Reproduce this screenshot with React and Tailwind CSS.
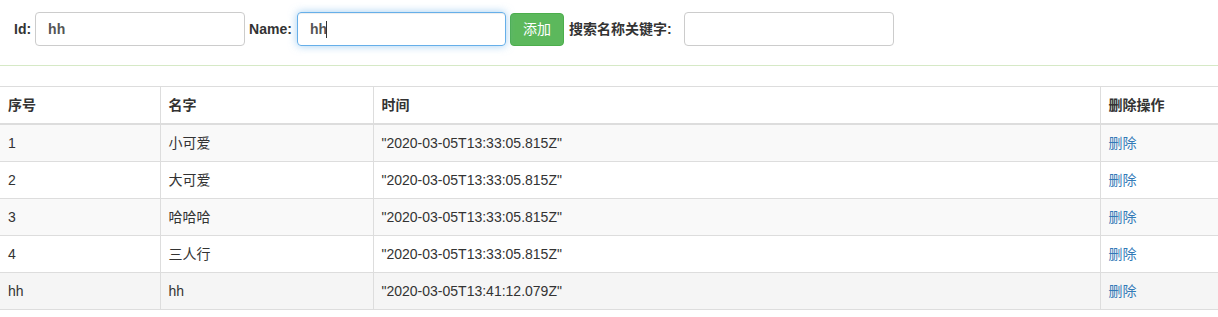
import React from "react";

const rows = [
  { id: "1", name: "小可爱", time: '"2020-03-05T13:33:05.815Z"' },
  { id: "2", name: "大可爱", time: '"2020-03-05T13:33:05.815Z"' },
  { id: "3", name: "哈哈哈", time: '"2020-03-05T13:33:05.815Z"' },
  { id: "4", name: "三人行", time: '"2020-03-05T13:33:05.815Z"' },
  { id: "hh", name: "hh", time: '"2020-03-05T13:41:12.079Z"' },
];

const font = {
  fontFamily: '"Liberation Sans", "Noto Sans CJK SC", sans-serif',
};

export default function App() {
  return (
    <div className="w-[1218px] h-[317px] bg-white text-[14px] leading-[20px] text-[#333] overflow-hidden" style={font}>
      {/* panel */}
      <div className="border-b border-[#d6e9c6] h-[66px] mb-[20px]">
        <div className="flex items-center pt-[12px] pl-[14px] font-bold">
          <span>Id:</span>
          <input
            readOnly
            value="hh"
            className="ml-[4px] w-[210px] h-[34px] px-[12px] border border-[#ccc] rounded-[4px] font-bold text-[14px] text-[#555] outline-none"
          />
          <span className="ml-[4px]">Name:</span>
          <div className="relative ml-[5px]">
            <input
              readOnly
              value="hh"
              className="w-[209px] h-[34px] px-[12px] border border-[#66afe9] rounded-[4px] font-bold text-[14px] text-[#555] outline-none shadow-[inset_0_1px_1px_rgba(0,0,0,0.075),0_0_8px_rgba(102,175,233,0.6)]"
            />
            <span className="absolute left-[29px] top-[9px] w-px h-[17px] bg-[#333]" />
          </div>
          <button className="ml-[4px] h-[33px] px-[12px] rounded-[4px] bg-[#5cb85c] border border-[#4cae4c] text-white font-normal text-[14px]">
            添加
          </button>
          <span className="ml-[5px]">搜索名称关键字:</span>
          <input
            readOnly
            className="ml-[12px] w-[210px] h-[34px] px-[12px] border border-[#ccc] rounded-[4px] outline-none"
          />
        </div>
      </div>

      {/* table */}
      <table className="w-full border-collapse">
        <thead>
          <tr className="border-t border-[#ddd]">
            <th className="w-[160px] text-left px-[8px] py-[8px] border-b-2 border-[#ddd]">序号</th>
            <th className="w-[213px] text-left px-[8px] py-[8px] border-b-2 border-l border-[#ddd]">名字</th>
            <th className="w-[727px] text-left px-[8px] py-[8px] border-b-2 border-l border-[#ddd]">时间</th>
            <th className="text-left px-[8px] py-[8px] border-b-2 border-l border-[#ddd]">删除操作</th>
          </tr>
        </thead>
        <tbody>
          {rows.map((r, i) => (
            <tr
              key={i}
              className={i === 4 ? "bg-[#f5f5f5]" : i % 2 === 0 ? "bg-[#f9f9f9]" : "bg-white"}
            >
              <td className="px-[8px] py-[8px] border-b border-[#ddd]">{r.id}</td>
              <td className="px-[8px] py-[8px] border-b border-l border-[#ddd]">{r.name}</td>
              <td className="px-[8px] py-[8px] border-b border-l border-[#ddd]">{r.time}</td>
              <td className="px-[8px] py-[8px] border-b border-l border-[#ddd]">
                <a href="#" className="text-[#337ab7]">删除</a>
              </td>
            </tr>
          ))}
        </tbody>
      </table>
    </div>
  );
}
